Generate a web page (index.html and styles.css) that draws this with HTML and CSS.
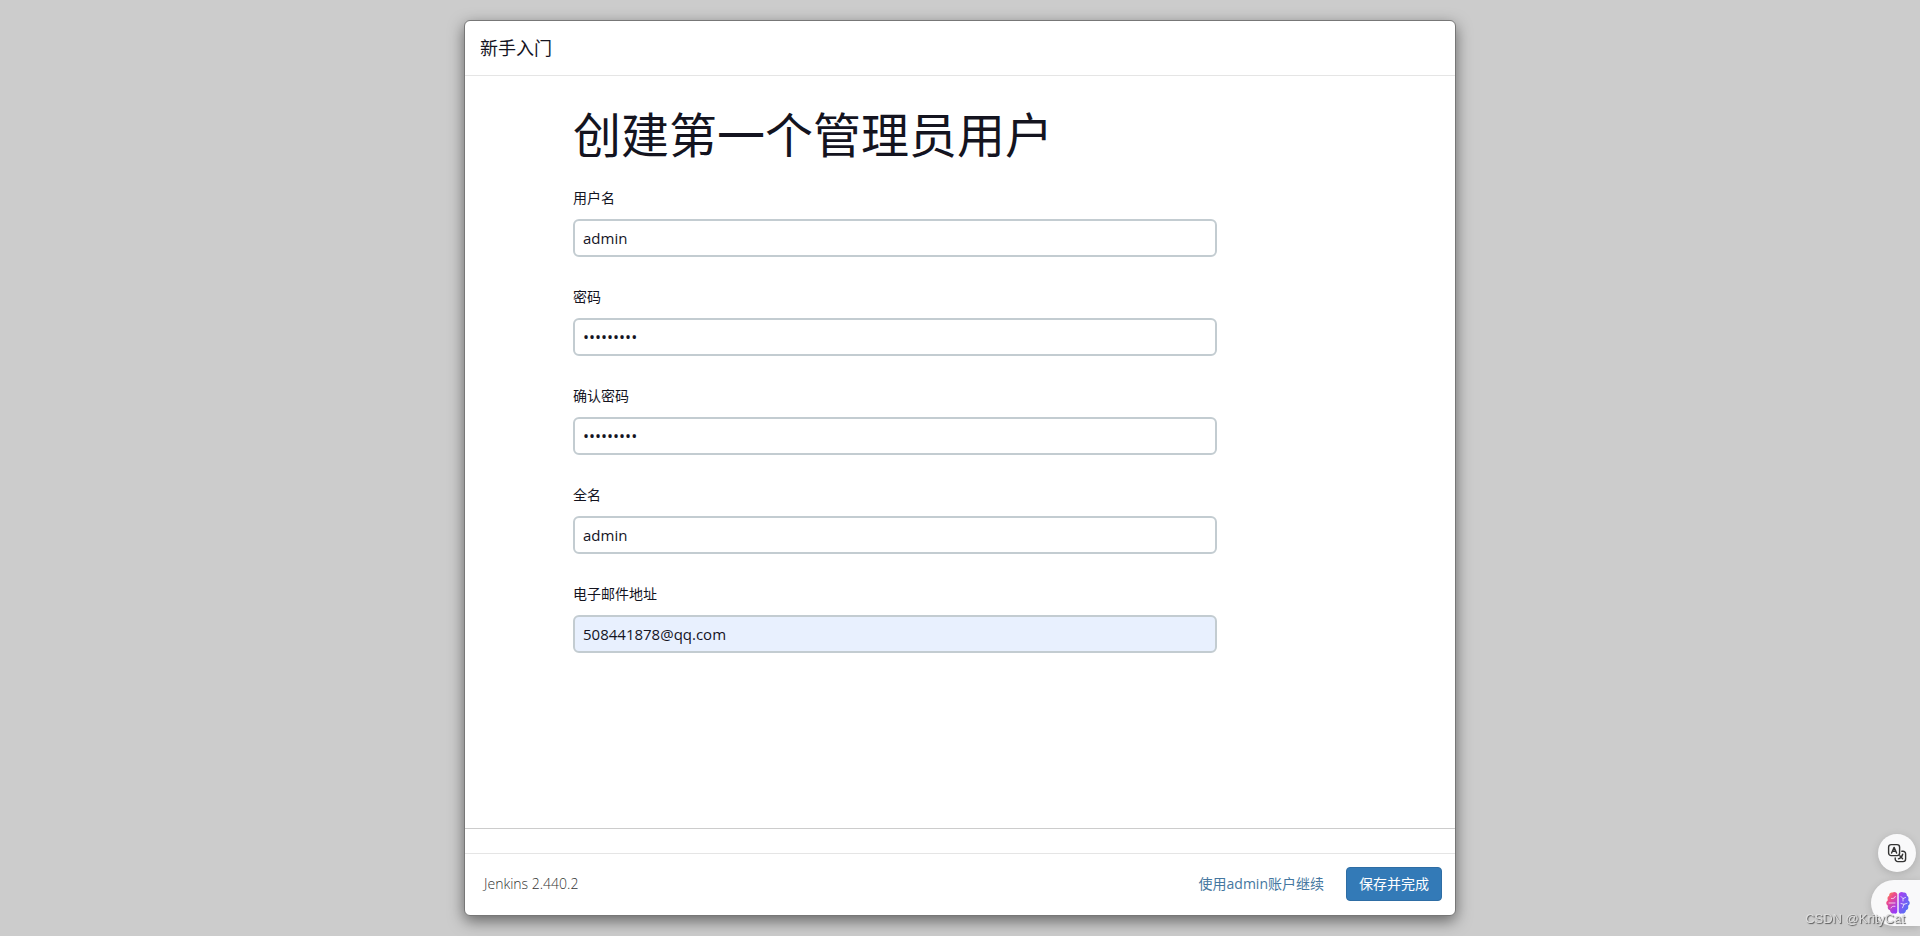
FILE: index.html
```html
<!DOCTYPE html>
<html lang="zh-CN">
<head>
<meta charset="utf-8">
<title>新手入门</title>
<meta name="viewport" content="width=device-width, initial-scale=1">
<link rel="stylesheet" href="styles.css">
</head>
<body>
<main class="dialog">
  <header class="dialog-header">
    <h2 class="dialog-title">新手入门</h2>
  </header>
  <form class="dialog-form" id="setup-form">
    <h1 class="form-title">创建第一个管理员用户</h1>
    <div class="field">
      <label class="field-label" for="username">用户名</label>
      <input class="field-input" id="username" type="text" value="admin">
    </div>
    <div class="field">
      <label class="field-label" for="password">密码</label>
      <input class="field-input field-input-password" id="password" type="password" value="123456789">
    </div>
    <div class="field">
      <label class="field-label" for="confirm">确认密码</label>
      <input class="field-input field-input-password" id="confirm" type="password" value="123456789">
    </div>
    <div class="field">
      <label class="field-label" for="fullname">全名</label>
      <input class="field-input" id="fullname" type="text" value="admin">
    </div>
    <div class="field">
      <label class="field-label" for="email">电子邮件地址</label>
      <input class="field-input field-input-filled" id="email" type="email" value="508441878@qq.com">
    </div>
  </form>
  <div class="dialog-spacer"></div>
  <footer class="dialog-footer">
    <span class="version">Jenkins 2.440.2</span>
    <div class="actions">
      <a class="skip-link" href="#">使用admin账户继续</a>
      <button class="save-button" type="submit" form="setup-form">保存并完成</button>
    </div>
  </footer>
</main>
<aside class="floating-tools">
  <button class="translate-button" type="button" aria-label="翻译">
    <svg width="20" height="20" viewBox="0 0 20 20" fill="none" stroke="#333" stroke-width="1.4" stroke-linecap="round" stroke-linejoin="round">
      <rect x="1.6" y="1.6" width="11" height="11" rx="2.6"/>
      <path d="M4.6 10 7.1 4.4 9.6 10M5.5 8.3h3.2"/>
      <path d="M14.8 8.2h1.2a2.6 2.6 0 0 1 2.6 2.6v5.2a2.6 2.6 0 0 1-2.6 2.6h-5.2a2.6 2.6 0 0 1-2.6-2.6v-1.1"/>
      <path d="M11.5 15.8c2-.7 3.600-2.300 4.200-4.600M12.800 12.700l2.800 3"/>
    </svg>
  </button>
  <button class="assistant-button" type="button" aria-label="助手">
    <svg width="24" height="24" viewBox="0 0 24 24">
      <defs>
        <linearGradient id="brain-left" x1="0" y1="0" x2=".6" y2="1">
          <stop offset="0" stop-color="#f9a03c"/><stop offset=".4" stop-color="#ee4a8c"/><stop offset="1" stop-color="#9a3cf5"/>
        </linearGradient>
        <linearGradient id="brain-right" x1="0" y1="0" x2="1" y2="1">
          <stop offset="0" stop-color="#b03cf0"/><stop offset="1" stop-color="#3f7df6"/>
        </linearGradient>
      </defs>
      <path fill="url(#brain-left)" d="M11.300 3C10.600 1 8 .3 6.500 1.500 4.500 1 2.800 2.700 3.200 4.800 1.500 5.500 1 7.700 2 9.200-.3 10.500-.3 13.500 2 14.800c-.8 2 .1 4 2 4.400.3 2.500 2.300 3.800 4.300 3.300 1.600.6 3-.5 3-2.200z"/>
      <path fill="url(#brain-right)" d="M12.700 3c.7-2 3.300-2.700 4.800-1.500 2-.5 3.700 1.200 3.300 3.300 1.700.7 2.200 2.900 1.200 4.400 2.300 1.300 2.300 4.300 0 5.600.8 2-.1 4-2 4.400-.3 2.500-2.300 3.800-4.300 3.300-1.600.6-3-.5-3-2.200z"/>
      <path fill="none" stroke="#fff" stroke-opacity=".8" stroke-width=".9" stroke-linecap="round" d="M5.500 7.500c2 .2 3.300-.4 3.800-2M3 12h6M5 17c.6-1.500 2-2 4-1.700M15 5.500l2 2 2.500-1M17 7.500V10M15 12.500l3 .8 3-1M18 13.300l-1.500 3.500"/>
    </svg>
  </button>
  <span class="watermark">CSDN @KrityCat</span>
</aside>
</body>
</html>
```
FILE: styles.css
```css
* {
  box-sizing: border-box;
}

body {
  margin: 0;
  min-height: 100vh;
  padding: 20px;
  display: flex;
  justify-content: center;
  background: #ccc;
  color: #14141f;
  font-family: "Open Sans", "Noto Sans CJK SC", sans-serif;
  font-size: 14px;
  line-height: 20px;
  overflow: hidden;
}

.dialog {
  width: 100%;
  max-width: 992px;
  display: flex;
  flex-direction: column;
  border: 1px solid #777;
  border-radius: 6px;
  background: #fff;
  box-shadow: 0 5px 15px rgba(0, 0, 0, 0.5);
}

.dialog-header {
  padding: 15px;
  border-bottom: 1px solid #e5e5e5;
}

.dialog-title {
  margin: 0;
  font-size: 18px;
  line-height: 24px;
  font-weight: 400;
}

.dialog-form {
  flex: 1;
  padding: 29px 238px 0 108px;
  border-bottom: 1px solid #ccc;
}

.form-title {
  margin: 0 0 23px;
  font-size: 48px;
  line-height: 60px;
  font-weight: 400;
}

.field {
  margin-bottom: 30px;
}

.field-label {
  display: block;
  margin-bottom: 11px;
}

.field-input {
  display: block;
  width: 100%;
  height: 38px;
  padding: 0 8px;
  border: 2px solid #c3ccd1;
  border-radius: 6px;
  background: #fff;
  color: #14141f;
  font: inherit;
  font-size: 15px;
}

.field-input-password {
  font-size: 16px;
}

.field-input-filled {
  background: #e8f0fe;
}

.dialog-spacer {
  height: 24px;
}

.dialog-footer {
  display: flex;
  align-items: center;
  justify-content: space-between;
  padding: 13px 13px 14px 19px;
  border-top: 1px solid #e5e5e5;
}

.version {
  color: #333;
  font-weight: 300;
}

.actions {
  display: flex;
  align-items: center;
  gap: 22px;
}

.skip-link {
  color: #4577a0;
  text-decoration: none;
}

.save-button {
  height: 34px;
  padding: 0 12px;
  border: 1px solid #2e6da4;
  border-radius: 4px;
  background: #337ab7;
  color: #fff;
  font: inherit;
}

.floating-tools {
  position: fixed;
  right: 0;
  bottom: 10px;
  display: flex;
  flex-direction: column;
  align-items: flex-end;
  gap: 8px;
}

.translate-button,
.assistant-button {
  display: flex;
  align-items: center;
  padding: 0;
  border: 0;
  background: #f9f9fa;
  box-shadow: 0 2px 8px rgba(0, 0, 0, 0.15);
}

.translate-button {
  width: 38px;
  height: 38px;
  margin-right: 4px;
  justify-content: center;
  border-radius: 50%;
}

.assistant-button {
  width: 49px;
  height: 46px;
  padding-left: 15px;
  border-radius: 23px 0 0 23px;
}

.watermark {
  position: absolute;
  right: 15px;
  bottom: -1px;
  color: #dedede;
  font-family: "Liberation Sans", Arial, sans-serif;
  font-size: 13px;
  line-height: 16px;
  white-space: nowrap;
  text-shadow: 1px 1px 1px #555;
}
```
